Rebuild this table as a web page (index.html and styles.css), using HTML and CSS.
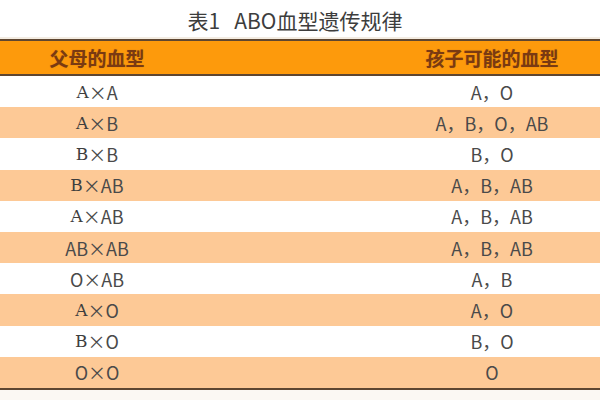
FILE: index.html
```html
<!DOCTYPE html>
<html lang="zh-CN">
<head>
<meta charset="utf-8">
<title>ABO血型遗传规律</title>
<link rel="stylesheet" href="styles.css">
</head>
<body>
<div class="page">
  <h1 class="title"><span class="num">表1</span>ABO血型遗传规律</h1>
  <div class="table">
    <div class="row head"><div class="cell c1">父母的血型</div><div class="cell c2">孩子可能的血型</div></div>
    <div class="row"><div class="cell c1"><span class="serif">A</span>×A</div><div class="cell c2">A，O</div></div>
    <div class="row alt"><div class="cell c1"><span class="serif">A</span>×B</div><div class="cell c2">A，B，O，AB</div></div>
    <div class="row"><div class="cell c1"><span class="serif">B</span>×B</div><div class="cell c2">B，O</div></div>
    <div class="row alt"><div class="cell c1"><span class="serif">B</span>×AB</div><div class="cell c2">A，B，AB</div></div>
    <div class="row"><div class="cell c1"><span class="serif">A</span>×AB</div><div class="cell c2">A，B，AB</div></div>
    <div class="row alt"><div class="cell c1">AB×AB</div><div class="cell c2">A，B，AB</div></div>
    <div class="row"><div class="cell c1">O×AB</div><div class="cell c2">A，B</div></div>
    <div class="row alt"><div class="cell c1"><span class="serif">A</span>×O</div><div class="cell c2">A，O</div></div>
    <div class="row"><div class="cell c1"><span class="serif">B</span>×O</div><div class="cell c2">B，O</div></div>
    <div class="row alt"><div class="cell c1">O×O</div><div class="cell c2">O</div></div>
  </div>
</div>
</body>
</html>
```
FILE: styles.css
```css
html, body {
  margin: 0;
  padding: 0;
  background: #ffffff;
  overflow: hidden;
}

.page {
  width: 600px;
  height: 400px;
  overflow: hidden;
  font-family: "Noto Sans CJK SC", "Noto Sans", sans-serif;
  background: #fbf8f3;
}

.title {
  margin: 0;
  height: 39px;
  padding-right: 10px;
  padding-top: 2px;
  display: flex;
  align-items: center;
  justify-content: center;
  font-size: 21px;
  font-weight: normal;
  color: #3d3d3d;
  background: #ffffff;
  border-bottom: 2px solid #f3ece2;
  box-sizing: border-box;
}

.num {
  margin-right: 14px;
}

.table {
  width: 790px;
  border-top: 2px solid #5e4631;
  border-bottom: 2px solid #5e4631;
}

.row {
  display: grid;
  grid-template-columns: 194px 596px;
  height: 31.2px;
  background: #ffffff;
  color: #4a4a4a;
  font-size: 18px;
}

.row.alt {
  background: #fdc996;
}

.row.head {
  height: 33px;
  background: #fd9a0c;
  border-bottom: 2px solid #5e4631;
  color: #7a3a12;
  font-weight: bold;
  font-size: 19px;
  text-shadow: 0 0 1px rgba(120, 60, 10, 0.4);
}

.cell {
  display: flex;
  align-items: center;
  justify-content: center;
  white-space: nowrap;
}

.serif {
  font-family: "DejaVu Serif", "Liberation Serif", serif;
  font-size: 17px;
  color: #3e3e3e;
}
```
